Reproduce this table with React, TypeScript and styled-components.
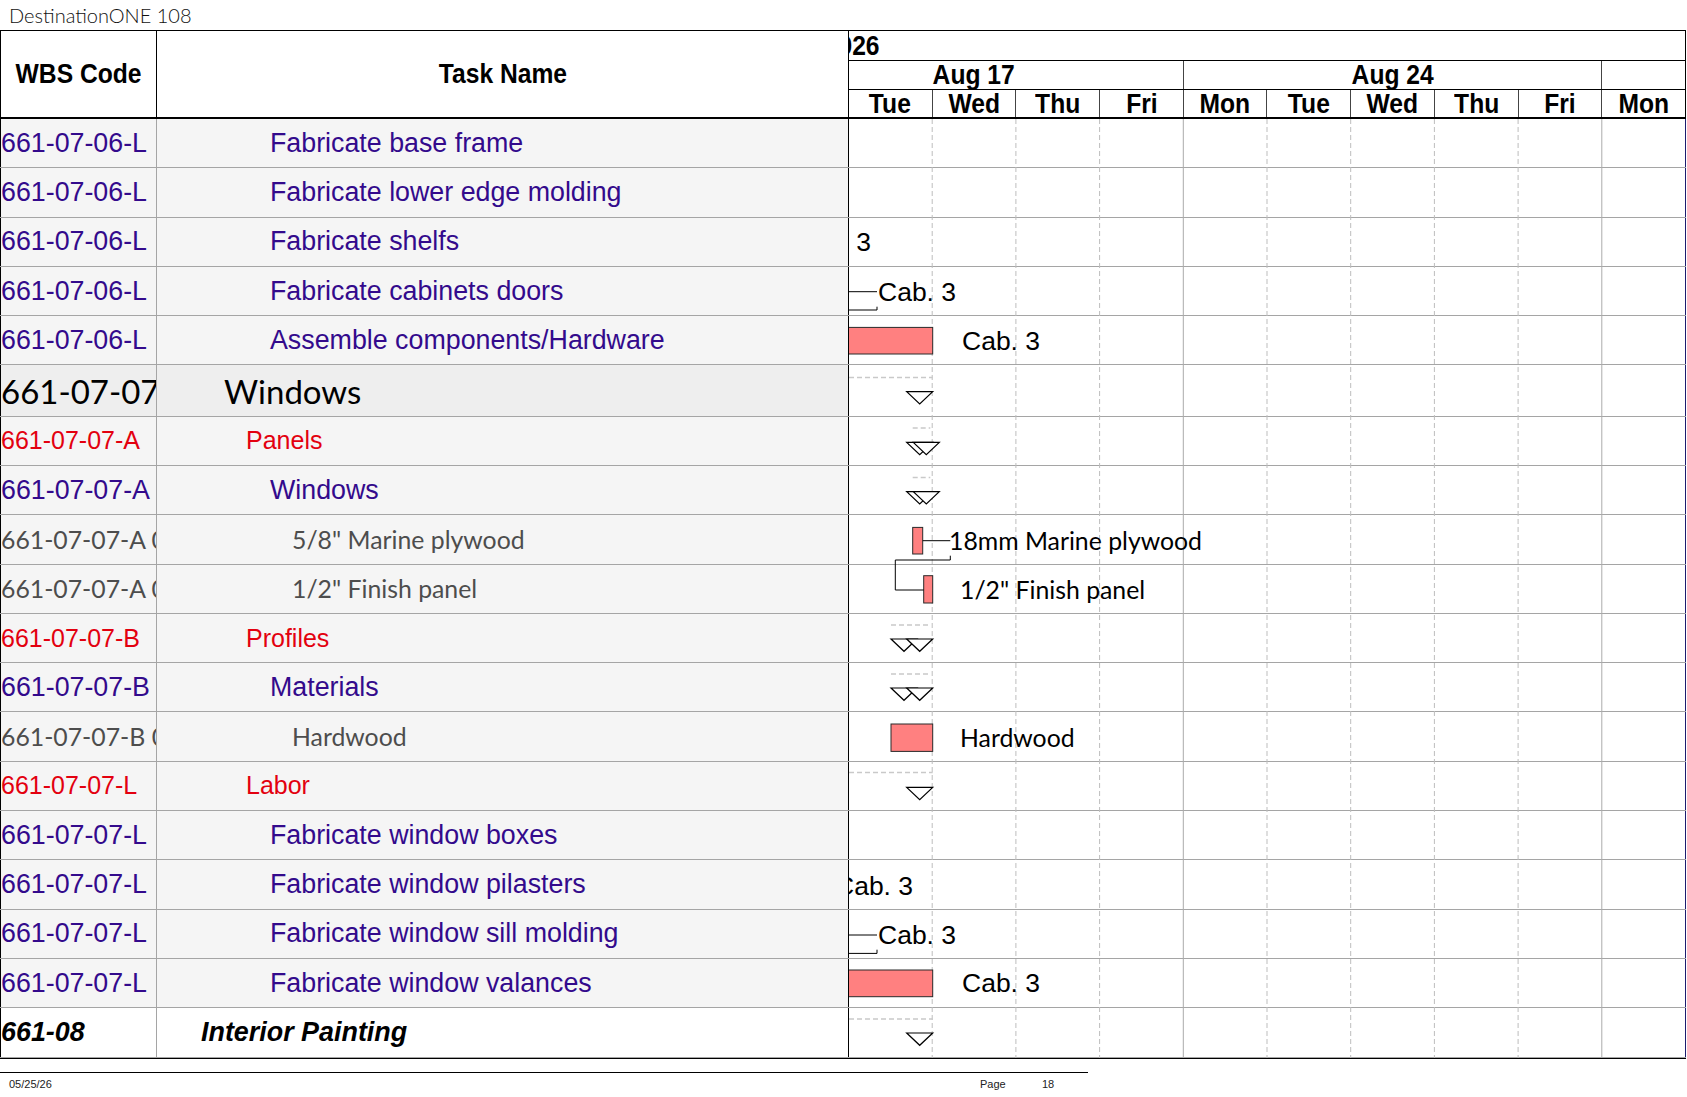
import React from 'react';
import styled, { createGlobalStyle, css } from 'styled-components';

const DAY = 83.7;

type Kind = 'task' | 'group' | 'item' | 'heading' | 'phase';

interface IRow {
    code: string;
    name: string;
    kind: Kind;
}

const rows: IRow[] = [
    { code: '661-07-06-L', name: 'Fabricate base frame', kind: 'task' },
    { code: '661-07-06-L', name: 'Fabricate lower edge molding', kind: 'task' },
    { code: '661-07-06-L', name: 'Fabricate shelfs', kind: 'task' },
    { code: '661-07-06-L', name: 'Fabricate cabinets doors', kind: 'task' },
    { code: '661-07-06-L', name: 'Assemble components/Hardware', kind: 'task' },
    { code: '661-07-07', name: 'Windows', kind: 'heading' },
    { code: '661-07-07-A', name: 'Panels', kind: 'group' },
    { code: '661-07-07-A', name: 'Windows', kind: 'task' },
    { code: '661-07-07-A 001', name: '5/8" Marine plywood', kind: 'item' },
    { code: '661-07-07-A 002', name: '1/2" Finish panel', kind: 'item' },
    { code: '661-07-07-B', name: 'Profiles', kind: 'group' },
    { code: '661-07-07-B', name: 'Materials', kind: 'task' },
    { code: '661-07-07-B 001', name: 'Hardwood', kind: 'item' },
    { code: '661-07-07-L', name: 'Labor', kind: 'group' },
    { code: '661-07-07-L', name: 'Fabricate window boxes', kind: 'task' },
    { code: '661-07-07-L', name: 'Fabricate window pilasters', kind: 'task' },
    { code: '661-07-07-L', name: 'Fabricate window sill molding', kind: 'task' },
    { code: '661-07-07-L', name: 'Fabricate window valances', kind: 'task' },
    { code: '661-08', name: 'Interior Painting', kind: 'phase' },
];

const weeks = ['Aug 17', 'Aug 24', 'Aug 31'];
const days = ['Mon', 'Tue', 'Wed', 'Thu', 'Fri'];

// gantt marks, x from the left edge of the timeline, y from the top of the body
const bars = [
    { x: -10, y: 208.4, w: 93.7, h: 26.6 },
    { x: 63.7, y: 408.4, w: 10, h: 26.6 },
    { x: 74.7, y: 456.7, w: 9, h: 27.3 },
    { x: 42, y: 605, w: 41.7, h: 27.4 },
    { x: -10, y: 851, w: 93.7, h: 26.7 },
];

const markers = [
    { x: 57.7, y: 272.7 },
    { x: 57.7, y: 323.4 },
    { x: 64.3, y: 323.4 },
    { x: 57.7, y: 372.7 },
    { x: 64.3, y: 372.7 },
    { x: 42, y: 520 },
    { x: 57.7, y: 520 },
    { x: 42, y: 569 },
    { x: 57.7, y: 569 },
    { x: 57.7, y: 668.4 },
    { x: 57.7, y: 914 },
];

const summaries = [
    { x1: 0, x2: 83.7, y: 258.4 },
    { x1: 63.7, x2: 81.3, y: 309 },
    { x1: 63.7, x2: 81.3, y: 358.4 },
    { x1: 42, x2: 81.3, y: 506 },
    { x1: 42, x2: 81.3, y: 555 },
    { x1: 0, x2: 83.7, y: 653.4 },
    { x1: 0, x2: 83.7, y: 900 },
];

const links = [
    '0,172.7 28,172.7',
    '0,191 28,191 28,187.7',
    '73.7,421.7 101.3,421.7',
    '101.3,436.7 101.3,441 46.3,441 46.3,471 74.7,471',
    '0,816 28,816',
    '0,834.4 28,834.4 28,830.7',
];

const labels: { x: number; y: number; text: string; face: 'arial' | 'calibri' }[] = [
    { x: -56, y: 122.7, text: 'Cab. 3', face: 'arial' },
    { x: 29, y: 172.7, text: 'Cab. 3', face: 'arial' },
    { x: 113, y: 221.7, text: 'Cab. 3', face: 'arial' },
    { x: 100, y: 421.7, text: '18mm Marine plywood', face: 'calibri' },
    { x: 111, y: 470.7, text: '1/2" Finish panel', face: 'calibri' },
    { x: 111, y: 618.7, text: 'Hardwood', face: 'calibri' },
    { x: -14, y: 766.7, text: 'Cab. 3', face: 'arial' },
    { x: 29, y: 816, text: 'Cab. 3', face: 'arial' },
    { x: 113, y: 864.4, text: 'Cab. 3', face: 'arial' },
];

const GlobalStyle = createGlobalStyle`
    *, *::before, *::after { box-sizing: border-box; }
    html, body { margin: 0; padding: 0; background: #fff; }
    body { font-family: 'Liberation Sans', Arial, sans-serif; }
`;

const Page = styled.div`
    width: 1687px;
    height: 1097px;
    overflow: hidden;
    background: #fff;
`;

const Title = styled.div`
    height: 30px;
    padding-left: 9px;
    font-family: Lato, 'Liberation Sans', sans-serif;
    font-weight: 300;
    font-size: 20px;
    line-height: 30px;
    color: #111;
`;

const Sheet = styled.div`
    width: 1686px;
    border-top: 1px solid #000;
    border-bottom: 1px solid #000;
`;

const HeadRow = styled.div`
    display: grid;
    grid-template-columns: 157px 692px 837px;
    height: 88px;
`;

const HeadCell = styled.div<{ $first?: boolean }>`
    display: flex;
    align-items: center;
    justify-content: center;
    border-right: 1px solid #000;
    border-bottom: 2px solid #000;
    ${(p) => p.$first && 'border-left: 1px solid #000;'}
`;

const HeadLabel = styled.span`
    display: inline-block;
    font-family: 'Liberation Sans', Arial, sans-serif;
    font-weight: 700;
    font-size: 28px;
    line-height: 1;
    color: #000;
    transform: scaleX(0.88);
    white-space: nowrap;
`;

const TimeHead = styled.div`
    overflow: hidden;
    border-right: 1px solid #000;
`;

const HeadTrack = styled.div`
    margin-left: -${DAY}px;
    width: ${DAY * 15}px;
`;

const YearBand = styled.div`
    height: 30px;
    display: flex;
    align-items: center;
    padding-left: 56px;
    border-bottom: 1px solid #000;
`;

const WeekBand = styled.div`
    display: flex;
    height: 29px;
    border-bottom: 1px solid #000;
`;

const WeekCell = styled.div`
    flex: none;
    width: ${DAY * 5}px;
    display: flex;
    align-items: center;
    justify-content: center;
    border-right: 1px solid #444;
`;

const DayBand = styled.div`
    display: flex;
    height: 29px;
    border-bottom: 2px solid #000;
`;

const DayCell = styled.div`
    flex: none;
    width: ${DAY}px;
    display: flex;
    align-items: center;
    justify-content: center;
    border-right: 1px solid #444;
`;

const Body = styled.div`
    position: relative;
`;

const Row = styled.div<{ $kind: Kind }>`
    display: grid;
    grid-template-columns: 157px 692px 837px;
    height: ${(p) => (p.$kind === 'heading' ? 51.2 : 49.3)}px;
    border-bottom: 1px solid #a5a5a5;

    &:last-child {
        border-bottom: none;
    }
`;

const kindText = {
    task: css`
        font-family: 'Liberation Sans', Arial, sans-serif;
        font-size: 26.8px;
        color: #330a8c;
    `,
    group: css`
        font-family: 'Liberation Sans', Arial, sans-serif;
        font-size: 25px;
        color: #e3000f;
    `,
    item: css`
        font-family: Lato, 'Liberation Sans', sans-serif;
        font-size: 24.8px;
        color: #4d4d4d;
    `,
    heading: css`
        font-family: Lato, 'Liberation Sans', sans-serif;
        font-size: 33px;
        color: #000;
    `,
    phase: css`
        font-family: 'Liberation Sans', Arial, sans-serif;
        font-size: 26.9px;
        font-weight: 700;
        font-style: italic;
        color: #000;
    `,
};

const kindBg: Record<Kind, string> = {
    task: '#f5f5f5',
    group: '#f5f5f5',
    item: '#f5f5f5',
    heading: '#eeeeee',
    phase: '#ffffff',
};

const indent: Record<Kind, number> = {
    task: 113,
    group: 89,
    item: 135,
    heading: 67,
    phase: 44,
};

const CodeCell = styled.div<{ $kind: Kind }>`
    display: flex;
    align-items: center;
    overflow: hidden;
    white-space: nowrap;
    border-left: 1px solid #000;
    border-right: 1px solid #a5a5a5;
    background: ${(p) => kindBg[p.$kind]};
    ${(p) => kindText[p.$kind]}
`;

const NameCell = styled.div<{ $kind: Kind }>`
    display: flex;
    align-items: center;
    overflow: hidden;
    white-space: nowrap;
    padding-left: ${(p) => indent[p.$kind]}px;
    border-right: 1px solid #000;
    background: ${(p) => kindBg[p.$kind]};
    ${(p) => kindText[p.$kind]}
`;

const TimeCell = styled.div`
    background: #fff;
    border-right: 1px solid #1c1c6e;
`;

const GanttLayer = styled.div`
    position: absolute;
    top: 0;
    left: 849px;
    width: 836px;
    height: 100%;
    overflow: hidden;
    pointer-events: none;

    & svg {
        display: block;
    }
`;

const Label = styled.text<{ $face: 'arial' | 'calibri' }>`
    fill: #000;
    font-family: ${(p) => (p.$face === 'arial' ? "'Liberation Sans', Arial, sans-serif" : "Lato, 'Liberation Sans', sans-serif")};
    font-size: ${(p) => (p.$face === 'arial' ? 26.5 : 24.8)}px;
`;

const Footer = styled.footer`
    width: 1088px;
    margin-top: 13px;
    border-top: 1.5px solid #000;
    display: grid;
    grid-template-columns: 971px 62px 1fr;
    padding: 5px 0 0 9px;
    font-family: 'Liberation Sans', Arial, sans-serif;
    font-size: 11px;
    color: #222;
`;

const GanttChart: React.FC = () => {
    const grid = Array.from({ length: 9 }, (_, i) => i + 1);
    return (
        <svg width={836} height={940}>
            {grid.map((k) => {
                const x = DAY * k - 0.5;
                const monday = k % 5 === 4;
                return (
                    <line
                        key={k}
                        x1={x}
                        x2={x}
                        y1={0}
                        y2={940}
                        stroke={monday ? '#ababab' : '#bdbdbd'}
                        strokeWidth={1}
                        strokeDasharray={monday ? undefined : '5 3'}
                    />
                );
            })}
            {summaries.map((s, i) => (
                <line key={i} x1={s.x1} x2={s.x2} y1={s.y} y2={s.y} stroke='#c9c9c9' strokeWidth={1.5} strokeDasharray='5 3' />
            ))}
            {bars.map((b, i) => (
                <rect key={i} x={b.x} y={b.y} width={b.w} height={b.h} fill='#ff8080' stroke='#2a2a2a' strokeWidth={1} />
            ))}
            {links.map((pts, i) => (
                <polyline key={i} points={pts} fill='none' stroke='#000' strokeWidth={1} />
            ))}
            {markers.map((m, i) => (
                <polygon
                    key={i}
                    points={`${m.x},${m.y} ${m.x + 26},${m.y} ${m.x + 13},${m.y + 12.3}`}
                    fill='#fff'
                    stroke='#000'
                    strokeWidth={1.2}
                />
            ))}
            {labels.map((l, i) => (
                <Label key={i} x={l.x} y={l.y} dominantBaseline='central' $face={l.face}>
                    {l.text}
                </Label>
            ))}
        </svg>
    );
};

const App: React.FC = () => {
    return (
        <Page>
            <GlobalStyle />
            <Title>DestinationONE 108</Title>
            <Sheet>
                <HeadRow>
                    <HeadCell $first>
                        <HeadLabel>WBS Code</HeadLabel>
                    </HeadCell>
                    <HeadCell>
                        <HeadLabel>Task Name</HeadLabel>
                    </HeadCell>
                    <TimeHead>
                        <HeadTrack>
                            <YearBand>
                                <HeadLabel>2026</HeadLabel>
                            </YearBand>
                            <WeekBand>
                                {weeks.map((w) => (
                                    <WeekCell key={w}>
                                        <HeadLabel>{w}</HeadLabel>
                                    </WeekCell>
                                ))}
                            </WeekBand>
                            <DayBand>
                                {weeks.map((w) =>
                                    days.map((d) => (
                                        <DayCell key={w + d}>
                                            <HeadLabel>{d}</HeadLabel>
                                        </DayCell>
                                    ))
                                )}
                            </DayBand>
                        </HeadTrack>
                    </TimeHead>
                </HeadRow>
                <Body>
                    {rows.map((r, i) => (
                        <Row key={i} $kind={r.kind}>
                            <CodeCell $kind={r.kind}>{r.code}</CodeCell>
                            <NameCell $kind={r.kind}>{r.name}</NameCell>
                            <TimeCell />
                        </Row>
                    ))}
                    <GanttLayer>
                        <GanttChart />
                    </GanttLayer>
                </Body>
            </Sheet>
            <Footer>
                <span>05/25/26</span>
                <span>Page</span>
                <span>18</span>
            </Footer>
        </Page>
    );
};

export default App;
